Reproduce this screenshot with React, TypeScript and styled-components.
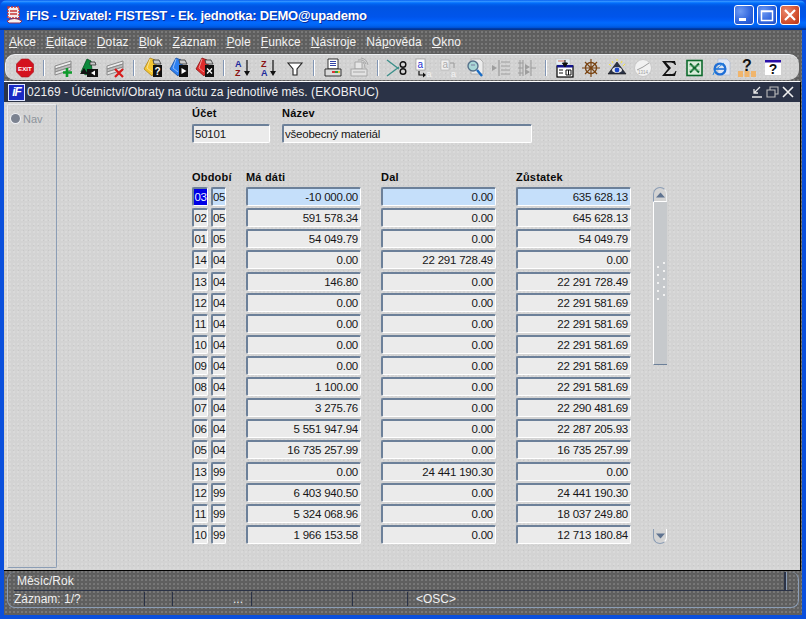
import React from "react";
import styled, { createGlobalStyle } from "styled-components";

const GlobalStyle = createGlobalStyle`
  html, body { margin: 0; padding: 0; background: #0054e3; }
  body { font-family: "Liberation Sans", Arial, sans-serif; font-size: 12px; }
`;

const dither = `
  background-image:
    radial-gradient(rgba(255,255,255,.16) .7px, transparent .9px),
    radial-gradient(rgba(0,0,0,.05) .7px, transparent .9px);
  background-size: 4px 4px, 5px 5px;
  background-position: 0 0, 2px 1px;
`;

const Frame = styled.div`
  width: 806px;
  height: 619px;
  display: flex;
  flex-direction: column;
  overflow: hidden;
  background: #0a4fdc;
`;

const TitleBar = styled.div`
  height: 30px;
  flex: none;
  display: flex;
  align-items: center;
  padding: 0 6px 0 6px;
  box-sizing: border-box;
  background: linear-gradient(#0058ee 0%, #3593ff 4%, #288eff 6%, #127dff 8%, #036ffc 10%, #0262ee 14%, #0057e5 20%, #0054e3 24%, #0055eb 56%, #005bf5 66%, #026afe 76%, #0062ef 86%, #0052d6 92%, #0040ab 94%, #003092 100%);
  border-radius: 7px 7px 0 0;
`;

const TitleText = styled.span`
  margin-left: 3px;
  flex: 1;
  color: #fff;
  font-family: "Liberation Sans", sans-serif;
  font-weight: 700;
  font-size: 13px;
  letter-spacing: -0.2px;
  white-space: nowrap;
  text-shadow: 1px 1px 0 #0a2f9c;
`;

const WinButton = styled.div<{ $red?: boolean }>`
  width: 20px;
  height: 20px;
  margin-left: 3px;
  box-sizing: border-box;
  border: 1px solid #fff;
  border-radius: 3px;
  display: flex;
  align-items: center;
  justify-content: center;
  background: ${(p) =>
    p.$red
      ? "radial-gradient(circle at 30% 30%, #e9866b, #d3512f 60%, #b93214)"
      : "radial-gradient(circle at 30% 30%, #6f9bf3, #2e63dc 60%, #1f4fc6)"};
`;

const Body = styled.div`
  flex: 1;
  min-height: 0;
  margin: 0 4px 4px;
  display: flex;
  flex-direction: column;
  background: #5f5f5f;
  ${dither}
`;

const MenuBar = styled.div`
  height: 24px;
  flex: none;
  display: flex;
  align-items: center;
  gap: 10px;
  padding: 0 0 0 5px;
  box-sizing: border-box;
`;

const MenuItem = styled.span`
  color: #f2f2f2;
  font-size: 12px;
  letter-spacing: 0.1px;
  u { text-underline-offset: 1px; }
`;

const ToolBar = styled.div`
  height: 26px;
  flex: none;
  margin: 0 3px 0 1px;
  padding-left: 10px;
  box-sizing: border-box;
  display: flex;
  align-items: center;
  background-color: #d1d1d1;
  ${dither}
  border-top: 1px solid #eef0f2;
  border-left: 1px solid #eef0f2;
  border-radius: 10px;
`;

const ToolGroup = styled.div`
  display: flex;
  gap: 8px;
  align-items: center;
`;

const ToolSep = styled.div`
  width: 2px;
  height: 16px;
  margin: 0 9px;
  background: linear-gradient(90deg, #8296b4 50%, #fff 50%);
`;

const ToolIcon = styled.svg`
  width: 18px;
  height: 20px;
  flex: none;
  display: block;
  overflow: visible;
`;

const InnerWindow = styled.div`
  flex: 1;
  min-height: 0;
  margin-top: 1px;
  margin-right: 1px;
  display: flex;
  flex-direction: column;
  border-top: 1px solid #fff;
  border-bottom: 1px solid #000;
  border-right: 1px solid #000;
`;

const InnerTitle = styled.div`
  height: 20px;
  flex: none;
  display: flex;
  align-items: center;
  padding-left: 4px;
  background: #2b3347;
  color: #f0f0f0;
  font-size: 12px;
  letter-spacing: 0.05px;
`;

const InnerTitleText = styled.span`
  flex: 1;
  margin-left: 2px;
  white-space: nowrap;
`;

const InnerControls = styled.svg`
  width: 46px;
  height: 14px;
  margin-right: 3px;
  flex: none;
`;

const Content = styled.div`
  flex: 1;
  min-height: 0;
  display: flex;
  background-color: #d3d3d3;
  ${dither}
  padding: 2px 0 2px 3px;
`;

const NavPanel = styled.div`
  width: 50px;
  box-sizing: border-box;
  border: 1px solid #e8eaee;
  border-right: 1px solid #8b9db5;
  border-bottom: 1px solid #8b9db5;
  border-radius: 2px;
  padding: 8px 0 0 3px;
  display: flex;
  align-items: flex-start;
  gap: 3px;
  flex: none;
  color: #8d939c;
  font-size: 11px;
`;

const NavRadio = styled.span`
  width: 9px;
  height: 9px;
  margin-top: 1px;
  box-sizing: border-box;
  border-radius: 50%;
  background: #7b8290;
  box-shadow: 0 0 0 1px #eef0f4;
`;

const Main = styled.div`
  margin-left: 135px;
  display: flex;
  flex-direction: column;
`;

const HeadFields = styled.div`
  display: grid;
  grid-template-columns: 78px 250px;
  column-gap: 12px;
  row-gap: 4px;
  padding-top: 3px;
`;

const Label = styled.div`
  font-weight: 700;
  font-size: 11px;
  letter-spacing: 0.2px;
  line-height: 13px;
  height: 13px;
  color: #0a0a0a;
  white-space: nowrap;
`;

const Field = styled.div<{ $right?: boolean; $active?: boolean }>`
  height: 19px;
  box-sizing: border-box;
  min-width: 0;
  border: 1px solid #fff;
  border-top: 2px solid #6c8099;
  border-left: 2px solid #6c8099;
  border-radius: 2px;
  background: ${(p) => (p.$active ? "#c5dffa" : "#ebebeb")};
  color: #161616;
  font-size: 11.5px;
  letter-spacing: -0.22px;
  line-height: 17px;
  white-space: nowrap;
  overflow: hidden;
  padding: 0 1px;
  text-align: ${(p) => (p.$right ? "right" : "left")};
  ${(p) => p.$right && "padding-right: 2px;"}
`;

const PeriodField = styled(Field)`
  padding: 0;
  overflow: visible;
  letter-spacing: -0.3px;
  text-align: center;
`;

const Selected = styled.span`
  background: #0000e6;
  color: #e8f0ff;
  display: block;
  height: 16px;
`;

const TableWrap = styled.div`
  display: flex;
  margin-top: 28px;
`;

const Table = styled.div`
  display: grid;
  grid-template-columns: 34px 115px 115px 115px;
  column-gap: 20px;
  row-gap: 2px;
`;

const HeaderCell = styled(Label)`
  grid-row: 1;
  margin-bottom: 2px;
  height: 12px;
`;

const PeriodPair = styled.div`
  display: grid;
  grid-template-columns: 16px 15px;
  column-gap: 3px;
`;

const ScrollBar = styled.div`
  width: 14px;
  margin: 16px 0 0 22px;
  display: flex;
  flex-direction: column;
  height: 357px;
`;

const ScrollButton = styled.div<{ $down?: boolean }>`
  width: 14px;
  height: 15px;
  flex: none;
  box-sizing: border-box;
  display: flex;
  align-items: center;
  justify-content: center;
  border: 1px solid #8b9db5;
  background: #d3d3d3;
  ${(p) =>
    p.$down
      ? "border-top: 0; border-right: 1px solid #fff; border-radius: 0 0 7px 7px; margin-top: auto;"
      : "border-bottom: 1px solid #fff; border-right: 1px solid #eef0f2; border-radius: 7px 7px 0 0;"}
`;

const ScrollTrack = styled.div`
  height: 163px;
  box-sizing: border-box;
  flex: none;
  background: #c6c9cc;
  border-left: 1px solid #fff;
  border-bottom: 1px solid #6c8099;
  display: flex;
  align-items: center;
  justify-content: center;
`;

const StatusArea = styled.div`
  height: 44px;
  flex: none;
  padding: 1px 3px 7px 3px;
  box-sizing: border-box;
`;

const StatusFrame = styled.div`
  height: 36px;
  box-sizing: border-box;
  border-left: 1px solid #8b9db5;
  border-bottom: 1px solid #8b9db5;
  border-right: 1px solid #8b9db5;
  border-radius: 8px;
  display: flex;
  flex-direction: column;
  color: #f0f0f0;
  font-size: 12px;
`;

const HintRow = styled.div`
  height: 19px;
  flex: none;
  box-sizing: border-box;
  margin: 0 5px 0 6px;
  padding-left: 3px;
  border-bottom: 1px solid #2b3347;
  display: flex;
  align-items: center;
  justify-content: space-between;
  line-height: 17px;
`;

const HintBar = styled.div`
  width: 2px;
  height: 18px;
  margin-right: 7px;
  background: #2b3347;
  box-shadow: 1px 0 0 #8b9db5;
`;

const RecordRow = styled.div`
  flex: 1;
  display: grid;
  grid-template-columns: 131px 28px 79px 101px 55px 1fr;
  margin-left: 6px;
  align-items: center;
`;

const RecordCell = styled.div<{ $right?: boolean }>`
  height: 14px;
  line-height: 14px;
  border-right: 1px solid #2b3347;
  white-space: nowrap;
  text-align: ${(p) => (p.$right ? "right" : "left")};
  padding-right: ${(p) => (p.$right ? "8px" : "0")};
  &:last-child { border-right: 0; padding-left: 8px; }
`;

const rows: [string, string, string, string, string][] = [
  ["03", "05", "-10 000.00", "0.00", "635 628.13"],
  ["02", "05", "591 578.34", "0.00", "645 628.13"],
  ["01", "05", "54 049.79", "0.00", "54 049.79"],
  ["14", "04", "0.00", "22 291 728.49", "0.00"],
  ["13", "04", "146.80", "0.00", "22 291 728.49"],
  ["12", "04", "0.00", "0.00", "22 291 581.69"],
  ["11", "04", "0.00", "0.00", "22 291 581.69"],
  ["10", "04", "0.00", "0.00", "22 291 581.69"],
  ["09", "04", "0.00", "0.00", "22 291 581.69"],
  ["08", "04", "1 100.00", "0.00", "22 291 581.69"],
  ["07", "04", "3 275.76", "0.00", "22 290 481.69"],
  ["06", "04", "5 551 947.94", "0.00", "22 287 205.93"],
  ["05", "04", "16 735 257.99", "0.00", "16 735 257.99"],
  ["13", "99", "0.00", "24 441 190.30", "0.00"],
  ["12", "99", "6 403 940.50", "0.00", "24 441 190.30"],
  ["11", "99", "5 324 068.96", "0.00", "18 037 249.80"],
  ["10", "99", "1 966 153.58", "0.00", "12 713 180.84"],
];

const menu: [string, string, string][] = [
  ["", "A", "kce"],
  ["", "E", "ditace"],
  ["", "D", "otaz"],
  ["", "B", "lok"],
  ["", "Z", "áznam"],
  ["", "P", "ole"],
  ["", "F", "unkce"],
  ["", "N", "ástroje"],
  ["Ná", "p", "ověda"],
  ["", "O", "kno"],
];

const RowsIcon = () => (
  <g stroke="#8a8a8a" fill="#ececec" strokeWidth="1">
    <path d="M1 8 L17 3 V6 L1 11 Z" />
    <path d="M1 11 L17 6 V9 L1 14 Z" fill="#bdbdbd" />
    <path d="M1 14 L17 9 V12 L1 17 Z" fill="#e4e4e4" />
  </g>
);

const Folder = ({ color, dark }: { color: string; dark: string }) => (
  <g>
    <path d="M0 11 L6 0 L11 2 L13 10 L8 18 Z" fill={color} stroke={dark} strokeWidth="0.8" />
    <path d="M6 1 L3 10 L8 14" fill="none" stroke="#fff" strokeOpacity=".6" strokeWidth="0.8" />
    <path d="M9 2 h6 l2 4 h-7 z" fill="#c9c9c9" stroke="#333" strokeWidth="0.8" />
    <rect x="9" y="7" width="9" height="12" fill="#111" />
  </g>
);

const Sort = ({ top, bottom, topColor, bottomColor }: { top: string; bottom: string; topColor: string; bottomColor: string }) => (
  <g fontFamily="Liberation Sans, sans-serif" fontWeight="700" fontSize="9">
    <text x="1" y="9" fill={topColor}>{top}</text>
    <text x="1" y="18" fill={bottomColor}>{bottom}</text>
    <path d="M13 2 V14" stroke="#111" strokeWidth="1.2" />
    <path d="M10 13 H16 L13 18 Z" fill="#111" />
  </g>
);

const tools: React.ReactNode[][] = [
  [
    <g key="exit">
      <path d="M5.5 1 H12.5 L17.5 6 V14 L12.5 19 H5.5 L0.5 14 V6 Z" fill="#d4121f" stroke="#a5101a" strokeWidth="0.6" />
      <text x="9" y="12.5" textAnchor="middle" fontFamily="Liberation Sans, sans-serif" fontWeight="700" fontSize="6.2" fill="#fff">EXIT</text>
    </g>,
  ],
  [
    <g key="add">
      <RowsIcon />
      <path d="M13 10 V19 M9 14.5 H18" stroke="#0f9a2c" strokeWidth="2.6" />
    </g>,
    <g key="prev">
      <path d="M1 14 L7 1 L11 3 L12 12 L6 17 Z" fill="#0c8a3c" stroke="#05511f" strokeWidth="0.8" />
      <path d="M10 4 h5 l1 3 h-6 z" fill="#c9c9c9" stroke="#333" strokeWidth="0.8" />
      <path d="M0 16 L4 10 L8 16 Z" fill="#111" />
      <rect x="7" y="11" width="11" height="8" fill="#111" />
      <path d="M15 12.5 V17.5 L11 15 Z" fill="#fff" />
    </g>,
    <g key="del">
      <RowsIcon />
      <path d="M9 11 L17 19 M17 11 L9 19" stroke="#d71a1a" strokeWidth="2.2" />
    </g>,
  ],
  [
    <g key="q">
      <Folder color="#f4c531" dark="#a9831a" />
      <text x="13.5" y="17" textAnchor="middle" fontFamily="Liberation Sans, sans-serif" fontWeight="700" fontSize="10" fill="#fff">?</text>
    </g>,
    <g key="run">
      <Folder color="#2d7ff0" dark="#174d9e" />
      <path d="M11.5 10 L16.5 13 L11.5 16 Z" fill="#fff" />
    </g>,
    <g key="cancel">
      <Folder color="#dd2b2b" dark="#8b1414" />
      <path d="M11 10.5 L16 15.5 M16 10.5 L11 15.5" stroke="#fff" strokeWidth="1.3" />
    </g>,
  ],
  [
    <Sort key="az" top="A" bottom="Z" topColor="#1c2a9c" bottomColor="#8a1212" />,
    <Sort key="za" top="Z" bottom="A" topColor="#8a1212" bottomColor="#1c2a9c" />,
    <path key="filter" d="M2 5 H16 L11 11 V17 H7 V11 Z" fill="#fff" stroke="#222" strokeWidth="1.1" />,
  ],
  [
    <g key="print" stroke="#222" strokeWidth="0.9">
      <path d="M4 1 H14 V11 H4 Z" fill="#fff" />
      <path d="M6 3.5 H12 M6 5.5 H12 M6 7.5 H12" stroke="#1c2f9c" />
      <path d="M1 11 H17 V18 H1 Z" fill="#dadada" />
      <rect x="8" y="13" width="3" height="2" fill="#d33" stroke="none" />
      <rect x="11" y="13" width="3" height="2" fill="#2a9c3c" stroke="none" />
      <rect x="14" y="13" width="2" height="2" fill="#e7c52a" stroke="none" />
    </g>,
    <g key="printall" stroke="#a2a2a2" strokeWidth="0.9" fill="none">
      <path d="M5 4 H12 V11 H5 Z" fill="#e6e6e6" />
      <path d="M8 2 Q14 1 16 6 M11 0 Q17 1 18 7 M13 4 Q15 6 15 10" />
      <path d="M1 11 H17 V18 H1 Z" fill="#e2e2e2" />
      <path d="M3 14 H15" />
    </g>,
  ],
  [
    <g key="cut" fill="none" strokeWidth="1.1">
      <path d="M-1 2 L11 11 M-1 18 L11 9" stroke="#3d8f8a" strokeWidth="1.4" />
      <circle cx="15" cy="6.5" r="2.8" stroke="#111" strokeWidth="1.4" />
      <circle cx="15" cy="13.5" r="2.8" stroke="#111" strokeWidth="1.4" />
    </g>,
    <g key="copy" fontFamily="Liberation Sans, sans-serif">
      <rect x="2" y="1" width="9" height="11" fill="#fff" stroke="#888" strokeWidth="0.6" />
      <text x="3.5" y="10" fontSize="10" fill="#1c2fd0">a</text>
      <path d="M5 13 V17 H10" fill="none" stroke="#111" strokeWidth="1.2" />
      <path d="M9 14.5 L12 17 L9 19.5 Z" fill="#111" />
      <text x="12.5" y="19" fontSize="9" fill="#f4f4f4">a</text>
    </g>,
    <g key="paste" fontFamily="Liberation Sans, sans-serif">
      <rect x="1" y="2" width="8" height="10" fill="#efefef" stroke="#b0b0b0" strokeWidth="0.6" />
      <text x="2.5" y="10" fontSize="10" fill="#a9a9a9">a</text>
      <path d="M10 5 H14 V10" fill="none" stroke="#9a9a9a" strokeWidth="1" />
      <text x="11" y="19" fontSize="9" fill="#f4f4f4">a</text>
    </g>,
    <g key="find">
      <path d="M5 1 H14 L17 4 V16 H5 Z" fill="#ececec" stroke="#a8a8a8" strokeWidth="0.8" />
      <circle cx="7" cy="8" r="5" fill="#a8d6d6" stroke="#56708a" strokeWidth="1.4" />
      <path d="M5 7 H9" stroke="#7a7aa0" />
      <path d="M11 12 L16 18" stroke="#1a6cc4" strokeWidth="2.4" />
    </g>,
    <g key="ind" stroke="#9e9e9e" fill="none">
      <path d="M7 2 V18" strokeWidth="1.3" />
      <path d="M9 4 H18 M9 8 H18 M9 12 H18 M9 16 H18" strokeWidth="1" />
      <path d="M0 7 L5 10 L0 13 Z" fill="#9e9e9e" stroke="none" />
    </g>,
    <g key="ind2" stroke="#9e9e9e" fill="none">
      <path d="M2 2 V18 M5 2 V18 M13 2 V18" strokeWidth="1.1" />
      <path d="M0 5 H5 M0 10 H5 M0 15 H5 M13 10 H18" strokeWidth="1" />
      <path d="M7 6 L12 9 L7 12 Z M7 11 L12 14 L7 17 Z" fill="#9e9e9e" stroke="none" />
    </g>,
  ],
  [
    <g key="form">
      <rect x="0" y="1" width="14" height="6" fill="#e3eef4" stroke="#bbb" strokeWidth="0.5" />
      <path d="M2 3 H9" stroke="#d9705a" />
      <rect x="1" y="8" width="16" height="11" fill="#fff" stroke="#000" strokeWidth="1.2" />
      <rect x="1" y="7" width="16" height="2.5" fill="#14148c" />
      <path d="M3 12 H7 M3 15 H7 M10 12 H15 V17 H10 Z M12.5 12 V17" stroke="#111" fill="none" />
      <path d="M9 2 V7 M6.5 5 L9 9 L11.5 5 Z" fill="#111" stroke="#111" />
    </g>,
    <g key="wheel" stroke="#7a4514" fill="none" strokeWidth="1.4">
      <circle cx="9" cy="10" r="5.5" />
      <path d="M9 1 V19 M0 10 H18 M3 4 L15 16 M15 4 L3 16" strokeWidth="1.2" />
    </g>,
    <g key="eye">
      <path d="M9 4 L18 16 H0 Z" fill="#2b3347" stroke="#111" strokeWidth="0.6" />
      <ellipse cx="9" cy="12" rx="5" ry="3" fill="#e6e6e6" />
      <circle cx="9" cy="12" r="2.4" fill="#1a46c8" />
      <path d="M1 6 L3 8 M4 3 L5 5 M9 1 V3 M14 3 L13 5 M17 6 L15 8" stroke="#f5e33a" strokeWidth="1" />
    </g>,
    <g key="clock">
      <circle cx="9" cy="10" r="8.5" fill="#f1f1f1" stroke="#c8c8c8" />
      <path d="M3 12 L9 9 L15 5" stroke="#9e9e9e" fill="none" />
      <text x="9" y="16" textAnchor="middle" fontFamily="Liberation Sans, sans-serif" fontSize="4.5" fill="#9e9e9e">1314</text>
    </g>,
    <path key="sigma" d="M2 3 H15 L16 7 H15 Q14 4.5 11 4.5 H6 L11 10 L5.5 16 H12 Q14.5 16 15.5 13 H16.5 L15 18 H2 L8 10.8 Z" fill="#111" />,
    <g key="xls">
      <rect x="1" y="2.5" width="15" height="15" fill="#d9ecd9" stroke="#0d6a2c" strokeWidth="1.6" />
      <path d="M4 5.5 L13 14.5 M13 5.5 L4 14.5" stroke="#0d6a2c" strokeWidth="2" />
      <path d="M3 8 H14 M3 12 H14" stroke="#7bb98e" strokeWidth="0.7" />
    </g>,
    <g key="ie">
      <path d="M6 1 H15 L18 4 V17 H6 Z" fill="#dfe6f4" stroke="#b0bcd6" strokeWidth="0.7" />
      <circle cx="8" cy="11" r="5.4" fill="none" stroke="#1f6fd6" strokeWidth="2.3" />
      <path d="M3 11 H13" stroke="#1f6fd6" strokeWidth="1.6" />
      <path d="M1 17 Q2 12 12 5" fill="none" stroke="#2d8be0" strokeWidth="1" />
    </g>,
    <g key="help">
      <text x="9" y="13" textAnchor="middle" fontFamily="Liberation Sans, sans-serif" fontWeight="700" fontSize="16" fill="#111">?</text>
      <rect x="0" y="13" width="5" height="6" fill="#f0b56c" />
      <rect x="6.5" y="13" width="5" height="6" fill="#f0b56c" />
      <rect x="13" y="13" width="5" height="6" fill="#f0b56c" />
    </g>,
    <g key="helpw">
      <rect x="1" y="2" width="16" height="15" fill="#fff" />
      <rect x="1" y="2" width="16" height="2.5" fill="#2a11a8" />
      <text x="9" y="16" textAnchor="middle" fontFamily="Liberation Sans, sans-serif" fontWeight="700" fontSize="14" fill="#111">?</text>
    </g>,
  ],
];

const AppIcon = () => (
  <svg width="17" height="18" viewBox="0 0 17 18" style={{ flex: "none" }}>
    <rect x="2" y="1" width="11" height="11" fill="#f3e9e9" stroke="#c73636" strokeWidth="1.4" strokeDasharray="2 1" />
    <path d="M4 5 H11 M4 8 H11" stroke="#c73636" strokeWidth="1.3" />
    <path d="M1 15 Q8 10 16 15 L14 17 H3 Z" fill="#f5f0f0" stroke="#8c2c50" strokeWidth="1" />
  </svg>
);

const FormLogo = styled.div`
  width: 17px;
  height: 17px;
  flex: none;
  box-sizing: border-box;
  border: 1px solid #dfe6ff;
  outline: 1px solid #1a2cc8;
  outline-offset: -2px;
  background: #1a2ac4;
  color: #fff;
  font-family: "Liberation Sans", sans-serif;
  font-weight: 700;
  font-style: italic;
  font-size: 12px;
  letter-spacing: -1px;
  line-height: 14px;
  text-align: center;
`;

export default function App() {
  return (
    <Frame>
      <GlobalStyle />
      <TitleBar>
        <AppIcon />
        <TitleText>iFIS - Uživatel: FISTEST - Ek. jednotka: DEMO@upademo</TitleText>
        <WinButton>
          <svg width="14" height="14" viewBox="0 0 14 14"><rect x="2" y="10" width="7" height="3" fill="#fff" /></svg>
        </WinButton>
        <WinButton>
          <svg width="14" height="14" viewBox="0 0 14 14"><path d="M1.5 3 H12.5 V12.5 H1.5 Z M1.5 3.5 H12.5" fill="none" stroke="#fff" strokeWidth="1.5" /></svg>
        </WinButton>
        <WinButton $red>
          <svg width="14" height="14" viewBox="0 0 14 14"><path d="M2 2 L12 12 M12 2 L2 12" stroke="#fff" strokeWidth="2.2" /></svg>
        </WinButton>
      </TitleBar>
      <Body>
        <MenuBar>
          {menu.map(([pre, key, rest]) => (
            <MenuItem key={pre + key + rest}>
              {pre}
              <u>{key}</u>
              {rest}
            </MenuItem>
          ))}
        </MenuBar>
        <ToolBar>
          {tools.map((group, i) => (
            <React.Fragment key={i}>
              {i > 0 && <ToolSep />}
              <ToolGroup>
                {group.map((icon, j) => (
                  <ToolIcon key={j} viewBox="0 0 18 20">
                    {icon}
                  </ToolIcon>
                ))}
              </ToolGroup>
            </React.Fragment>
          ))}
        </ToolBar>
        <InnerWindow>
          <InnerTitle>
            <FormLogo>iF</FormLogo>
            <InnerTitleText>02169 - Účetnictví/Obraty na účtu za jednotlivé měs. (EKOBRUC)</InnerTitleText>
            <InnerControls viewBox="0 0 46 14">
              <path d="M9 2 L3 8 M3 4 V8 H7 M1 12 H11" fill="none" stroke="#e8e8e8" strokeWidth="1.3" />
              <path d="M16 5 H24 V12 H16 Z M19 5 V2 H27 V9 H24" fill="none" stroke="#bcbcbc" strokeWidth="1.1" />
              <path d="M32 2 L42 12 M42 2 L32 12" stroke="#efefef" strokeWidth="1.6" />
            </InnerControls>
          </InnerTitle>
          <Content>
            <NavPanel>
              <NavRadio />
              <span>Nav</span>
            </NavPanel>
            <Main>
              <HeadFields>
                <Label>Účet</Label>
                <Label>Název</Label>
                <Field>50101</Field>
                <Field>všeobecný materiál</Field>
              </HeadFields>
              <TableWrap>
                <Table>
                  <HeaderCell>Období</HeaderCell>
                  <HeaderCell>Má dáti</HeaderCell>
                  <HeaderCell>Dal</HeaderCell>
                  <HeaderCell>Zůstatek</HeaderCell>
                  {rows.map((r, i) => (
                    <React.Fragment key={i}>
                      <PeriodPair>
                        <PeriodField $active={i === 0}>{i === 0 ? <Selected>{r[0]}</Selected> : r[0]}</PeriodField>
                        <PeriodField $active={i === 0}>{r[1]}</PeriodField>
                      </PeriodPair>
                      <Field $right $active={i === 0}>{r[2]}</Field>
                      <Field $right $active={i === 0}>{r[3]}</Field>
                      <Field $right $active={i === 0}>{r[4]}</Field>
                    </React.Fragment>
                  ))}
                </Table>
                <ScrollBar>
                  <ScrollButton>
                    <svg width="9" height="6" viewBox="0 0 9 6"><path d="M0 5.5 L4.5 0.5 L9 5.5 Z" fill="#5f7390" /></svg>
                  </ScrollButton>
                  <ScrollTrack>
                    <svg width="10" height="42" viewBox="0 0 10 42">
                      {[0, 8, 16, 24, 32].map((y) => (
                        <g key={y} fill="#f2f2f2">
                          <rect x="7" y={y} width="2" height="2" />
                          <rect x="1" y={y + 4} width="2" height="2" />
                        </g>
                      ))}
                    </svg>
                  </ScrollTrack>
                  <ScrollButton $down>
                    <svg width="9" height="6" viewBox="0 0 9 6"><path d="M0 0.5 L4.5 5.5 L9 0.5 Z" fill="#5f7390" /></svg>
                  </ScrollButton>
                </ScrollBar>
              </TableWrap>
            </Main>
          </Content>
        </InnerWindow>
        <StatusArea>
          <StatusFrame>
            <HintRow>
              <span>Měsíc/Rok</span>
              <HintBar />
            </HintRow>
            <RecordRow>
              <RecordCell>Záznam: 1/?</RecordCell>
              <RecordCell />
              <RecordCell $right>...</RecordCell>
              <RecordCell />
              <RecordCell />
              <RecordCell>&lt;OSC&gt;</RecordCell>
            </RecordRow>
          </StatusFrame>
        </StatusArea>
      </Body>
    </Frame>
  );
}
